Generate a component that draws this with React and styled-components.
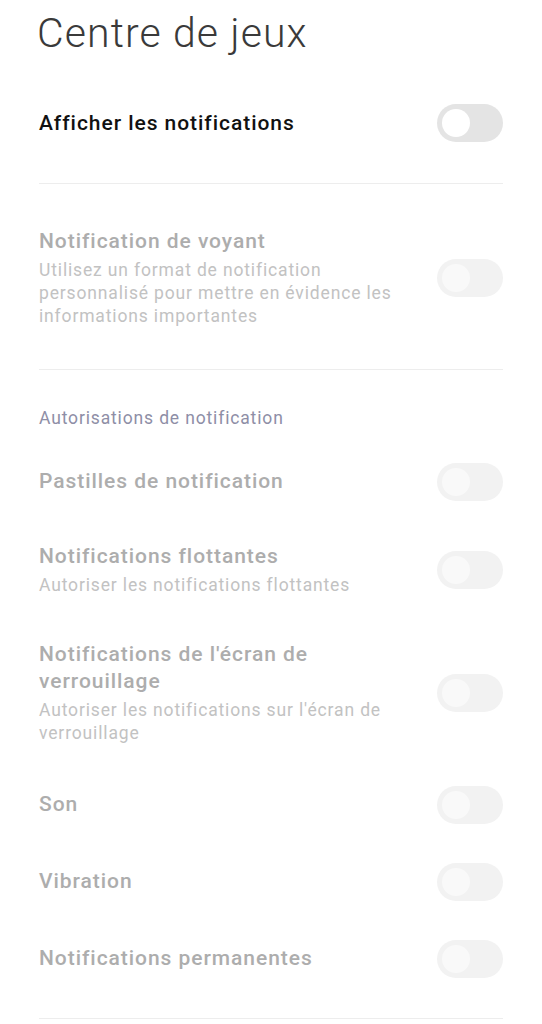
import React from "react";
import styled, { createGlobalStyle } from "styled-components";

const Global = createGlobalStyle`
  html, body { margin: 0; padding: 0; background: #ffffff; }
  body { font-family: Roboto, "Noto Sans", sans-serif; -webkit-font-smoothing: antialiased; }
  * { box-sizing: border-box; }
`;

const Page = styled.div`
  width: 542px;
  min-height: 1024px;
  padding: 0 39px 0 39px;
  background: #ffffff;
`;

const Header = styled.header`
  padding: 9px 0 27.5px 0;
`;

const PageTitle = styled.h1`
  margin: 0 0 0 -2px;
  font-family: Roboto, sans-serif;
  font-weight: 300;
  font-size: 41px;
  line-height: 48px;
  color: #3a3a3a;
  letter-spacing: 1.1px;
`;

const Row = styled.div`
  display: flex;
  align-items: center;
  justify-content: space-between;
  gap: 24px;
  min-height: 77px;
  padding: ${(p) => p.$pad || "0"};
`;

const TextCol = styled.div`
  display: flex;
  flex-direction: column;
  flex: 1;
  max-width: 362px;
`;

const ItemTitle = styled.div`
  font-weight: 500;
  font-size: 21px;
  line-height: 27px;
  letter-spacing: 0.95px;
  color: ${(p) => (p.$disabled ? "#adadad" : "#111111")};
`;

const ItemSub = styled.div`
  margin-top: 4px;
  font-weight: 400;
  font-size: 17.5px;
  line-height: 23px;
  letter-spacing: 0.85px;
  color: #c2c2c2;
`;

const Divider = styled.hr`
  margin: ${(p) => p.$margin || "21px 0 0 0"};
  border: none;
  height: 1px;
  background: #ededed;
`;

const SectionLabel = styled.div`
  margin: 36px 0 13.5px 0;
  font-size: 17.5px;
  line-height: 24px;
  letter-spacing: 0.85px;
  color: #8e8ea6;
`;

const Track = styled.div`
  flex: none;
  position: relative;
  width: 66px;
  height: 38px;
  border-radius: 19px;
  background: ${(p) => (p.$disabled ? "#f2f2f2" : "#e4e4e4")};
`;

const Knob = styled.div`
  position: absolute;
  left: 5px;
  top: 5px;
  width: 28px;
  height: 28px;
  border-radius: 50%;
  background: ${(p) => (p.$disabled ? "#f9f9f9" : "#ffffff")};
`;

const Toggle = ({ disabled }) => (
  <Track $disabled={disabled}>
    <Knob $disabled={disabled} />
  </Track>
);

const Item = ({ title, sub, disabled = true, pad }) => (
  <Row $pad={pad || (sub ? "23px 0 21px 0" : "0")}>
    <TextCol>
      <ItemTitle $disabled={disabled}>{title}</ItemTitle>
      {sub && <ItemSub>{sub}</ItemSub>}
    </TextCol>
    <Toggle disabled={disabled} />
  </Row>
);

export default function App() {
  return (
    <>
      <Global />
      <Page>
        <Header>
          <PageTitle>Centre de jeux</PageTitle>
        </Header>
        <Item title="Afficher les notifications" disabled={false} />
        <Divider />
        <Item
          title="Notification de voyant"
          sub="Utilisez un format de notification personnalisé pour mettre en évidence les informations importantes"
          pad="44px 0 41px 0"
        />
        <Divider $margin="0" />
        <SectionLabel>Autorisations de notification</SectionLabel>
        <Item title="Pastilles de notification" />
        <Item
          title="Notifications flottantes"
          sub="Autoriser les notifications flottantes"
        />
        <Item
          title="Notifications de l'écran de verrouillage"
          sub="Autoriser les notifications sur l'écran de verrouillage"
        />
        <Item title="Son" />
        <Item title="Vibration" />
        <Item title="Notifications permanentes" />
        <Divider />
      </Page>
    </>
  );
}
